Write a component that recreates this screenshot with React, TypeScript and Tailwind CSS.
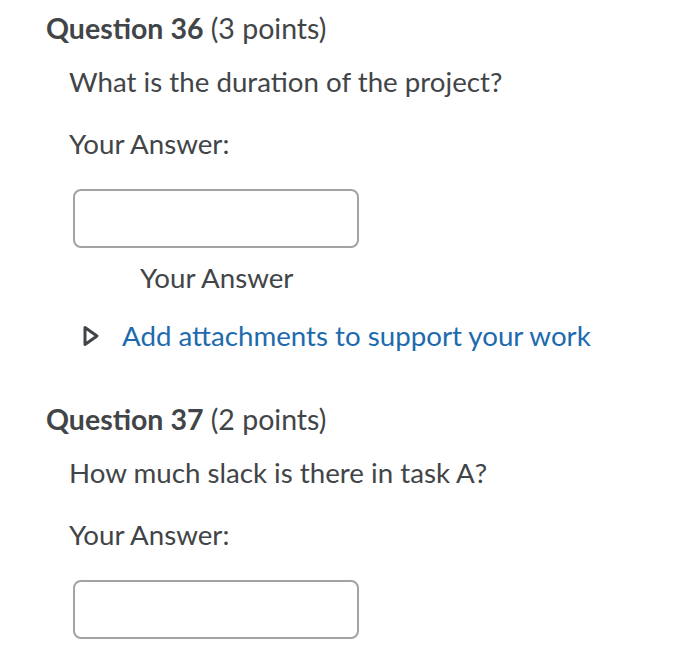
import React from "react";

function Question({ num, points, prompt, showAttach }: { num: number; points: number; prompt: string; showAttach: boolean }) {
  return (
    <div>
      <h2 className="text-[28.5px] leading-[32px] text-[#424548] pl-[46px]">
        <span className="font-bold">Question {num}</span> ({points} points)
      </h2>
      <div className="pl-[69px]">
        <p className="mt-[22px] text-[27.7px] leading-[32px] text-[#424548]">{prompt}</p>
        <p className="mt-[30px] text-[27.7px] leading-[32px] text-[#424548]">Your Answer:</p>
        <div className="mt-[29px] ml-[4px] w-[286px] h-[59px] border-2 border-[#a3a3a3] rounded-[8px] bg-white" />
        {showAttach && (
          <>
            <p className="mt-[14px] ml-[71px] text-[27.7px] leading-[32px] text-[#424548]">Your Answer</p>
            <div className="mt-[26px] flex items-center">
              <svg width="18" height="24" viewBox="0 0 18 24" className="ml-[13px]">
                <path d="M3 3.5 L15 12 L3 20.5 Z" fill="none" stroke="#424548" strokeWidth="3" strokeLinejoin="round" />
              </svg>
              <span className="ml-[22px] text-[27.7px] leading-[32px] text-[#1d6aae]">Add attachments to support your work</span>
            </div>
          </>
        )}
      </div>
    </div>
  );
}

export default function App() {
  return (
    <div className="w-[700px] h-[648px] bg-white overflow-hidden pt-[12px]" style={{ fontFamily: "Lato, 'Open Sans', sans-serif" }}>
      <Question num={36} points={3} prompt="What is the duration of the project?" showAttach />
      <div className="mt-[51px]">
        <Question num={37} points={2} prompt="How much slack is there in task A?" showAttach={false} />
      </div>
    </div>
  );
}
